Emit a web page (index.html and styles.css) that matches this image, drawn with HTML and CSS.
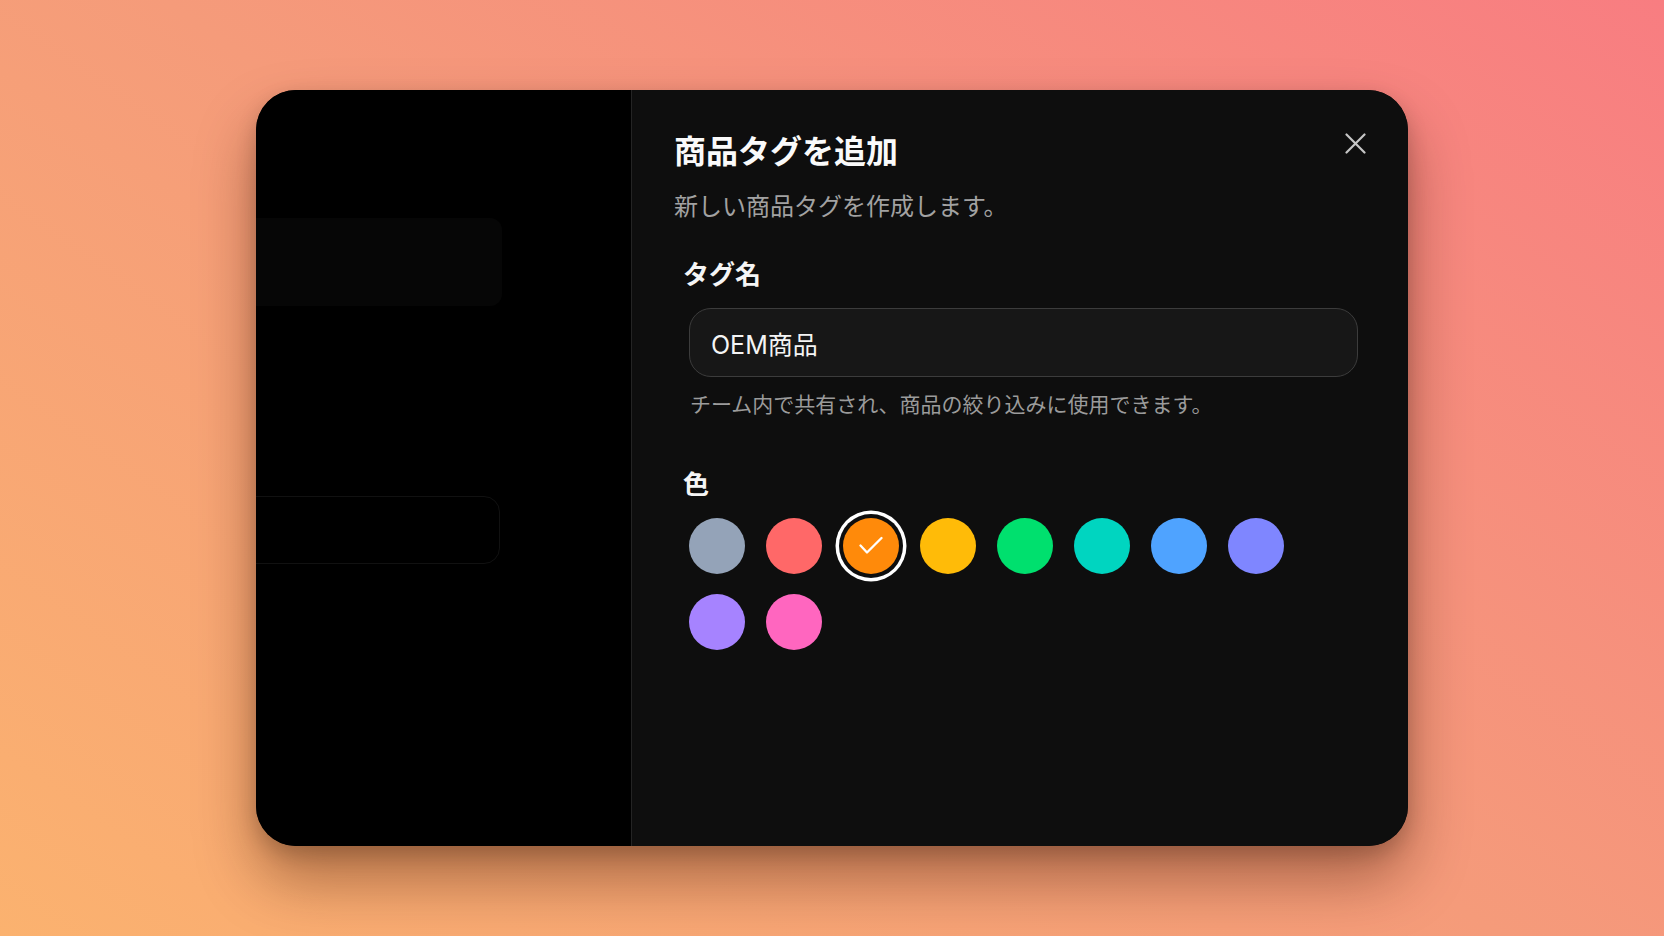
FILE: index.html
```html
<!DOCTYPE html>
<html lang="ja">
<head>
<meta charset="utf-8">
<title>商品タグを追加</title>
<link rel="stylesheet" href="styles.css">
</head>
<body>
<div class="card">
  <aside class="side">
    <div class="ghost-a"></div>
    <div class="ghost-b"></div>
  </aside>
  <section class="panel">
    <button class="close" aria-label="閉じる">
      <svg width="21" height="21" viewBox="0 0 21 21"><path d="M1.5 1.5 L19.5 19.5 M19.5 1.5 L1.5 19.5" stroke="#c6c6c6" stroke-width="2.2" stroke-linecap="round" fill="none"/></svg>
    </button>
    <h1 class="title">商品タグを追加</h1>
    <p class="subtitle">新しい商品タグを作成します。</p>

    <div class="label">タグ名</div>
    <div class="input">OEM商品</div>
    <p class="helper">チーム内で共有され、商品の絞り込みに使用できます。</p>

    <div class="label label-color">色</div>
    <div class="swatches">
      <span class="swatch c-slate"></span>
      <span class="swatch c-red"></span>
      <span class="swatch c-orange selected">
        <svg width="24" height="24" viewBox="0 0 24 24"><path d="M1.5 11.5 L8 18.5 L22.5 4" stroke="#fff" stroke-width="2.3" stroke-linecap="round" stroke-linejoin="round" fill="none"/></svg>
      </span>
      <span class="swatch c-amber"></span>
      <span class="swatch c-green"></span>
      <span class="swatch c-teal"></span>
      <span class="swatch c-blue"></span>
      <span class="swatch c-indigo"></span>
      <span class="swatch c-violet"></span>
      <span class="swatch c-pink"></span>
    </div>
  </section>
</div>
</body>
</html>
```

FILE: styles.css
```css
html, body {
  margin: 0;
  padding: 0;
}

body {
  width: 1664px;
  height: 936px;
  display: flex;
  align-items: center;
  justify-content: center;
  background: linear-gradient(35deg, #fbb26f 0%, #f59b7a 50%, #f87d81 100%);
  font-family: "Noto Sans CJK JP", "Noto Sans", sans-serif;
  overflow: hidden;
}

.card {
  width: 1152px;
  height: 756px;
  border-radius: 40px;
  overflow: hidden;
  display: flex;
  background: #0e0e0e;
  box-shadow: 0 34px 60px rgba(60, 20, 0, 0.4), 0 8px 20px rgba(0, 0, 0, 0.18);
}

.side {
  width: 375px;
  flex: none;
  background: #000;
  border-right: 1px solid #242424;
  padding-top: 128px;
  display: flex;
  flex-direction: column;
}

.ghost-a {
  margin-left: -40px;
  width: 286px;
  height: 88px;
  background: #060606;
  border-radius: 12px;
}

.ghost-b {
  margin-top: 190px;
  margin-left: -40px;
  width: 284px;
  height: 68px;
  box-sizing: border-box;
  border: 1px solid #111111;
  border-radius: 16px;
}

.panel {
  position: relative;
  flex: 1;
  background: #0e0e0e;
  padding: 40px 50px 0 42px;
}

.close {
  position: absolute;
  top: 43px;
  right: 42px;
  width: 21px;
  height: 21px;
  padding: 0;
  border: 0;
  background: none;
  display: flex;
}

.title {
  margin: 0;
  font-size: 32px;
  line-height: 1.2;
  font-weight: 700;
  color: #fafafa;
}

.subtitle {
  margin: 23px 0 0;
  font-size: 24px;
  line-height: 1.2;
  color: #a2a2a2;
}

.label {
  margin-top: 37px;
  padding-left: 9px;
  font-size: 26px;
  line-height: 1.2;
  font-weight: 700;
  color: #f5f5f5;
}

.input {
  margin: 20px 0 0 15px;
  height: 69px;
  box-sizing: border-box;
  border: 1.5px solid #3c3c3c;
  border-radius: 22px;
  background: #171717;
  padding: 0 21px;
  display: flex;
  align-items: center;
  font-family: Inter, "Noto Sans CJK JP", sans-serif;
  font-size: 25px;
  color: #f4f4f4;
}

.helper {
  margin: 14px 0 0 16px;
  font-size: 21px;
  line-height: 1.2;
  color: #9b9b9b;
}

.label-color {
  margin-top: 50px;
}

.swatches {
  margin: 20px 0 0 15px;
  display: flex;
  flex-wrap: wrap;
  gap: 20px 21px;
}

.swatch {
  width: 56px;
  height: 56px;
  border-radius: 50%;
  display: flex;
  align-items: center;
  justify-content: center;
}

.swatch.selected {
  box-shadow: 0 0 0 4px #0e0e0e, 0 0 0 7.5px #ffffff;
}

.c-slate { background: #94a3b8; }
.c-red { background: #ff6868; }
.c-orange { background: #ff8a0a; }
.c-amber { background: #ffbb08; }
.c-green { background: #00e06e; }
.c-teal { background: #00d5c0; }
.c-blue { background: #4fa3ff; }
.c-indigo { background: #7f86ff; }
.c-violet { background: #a683ff; }
.c-pink { background: #ff66bf; }
```
